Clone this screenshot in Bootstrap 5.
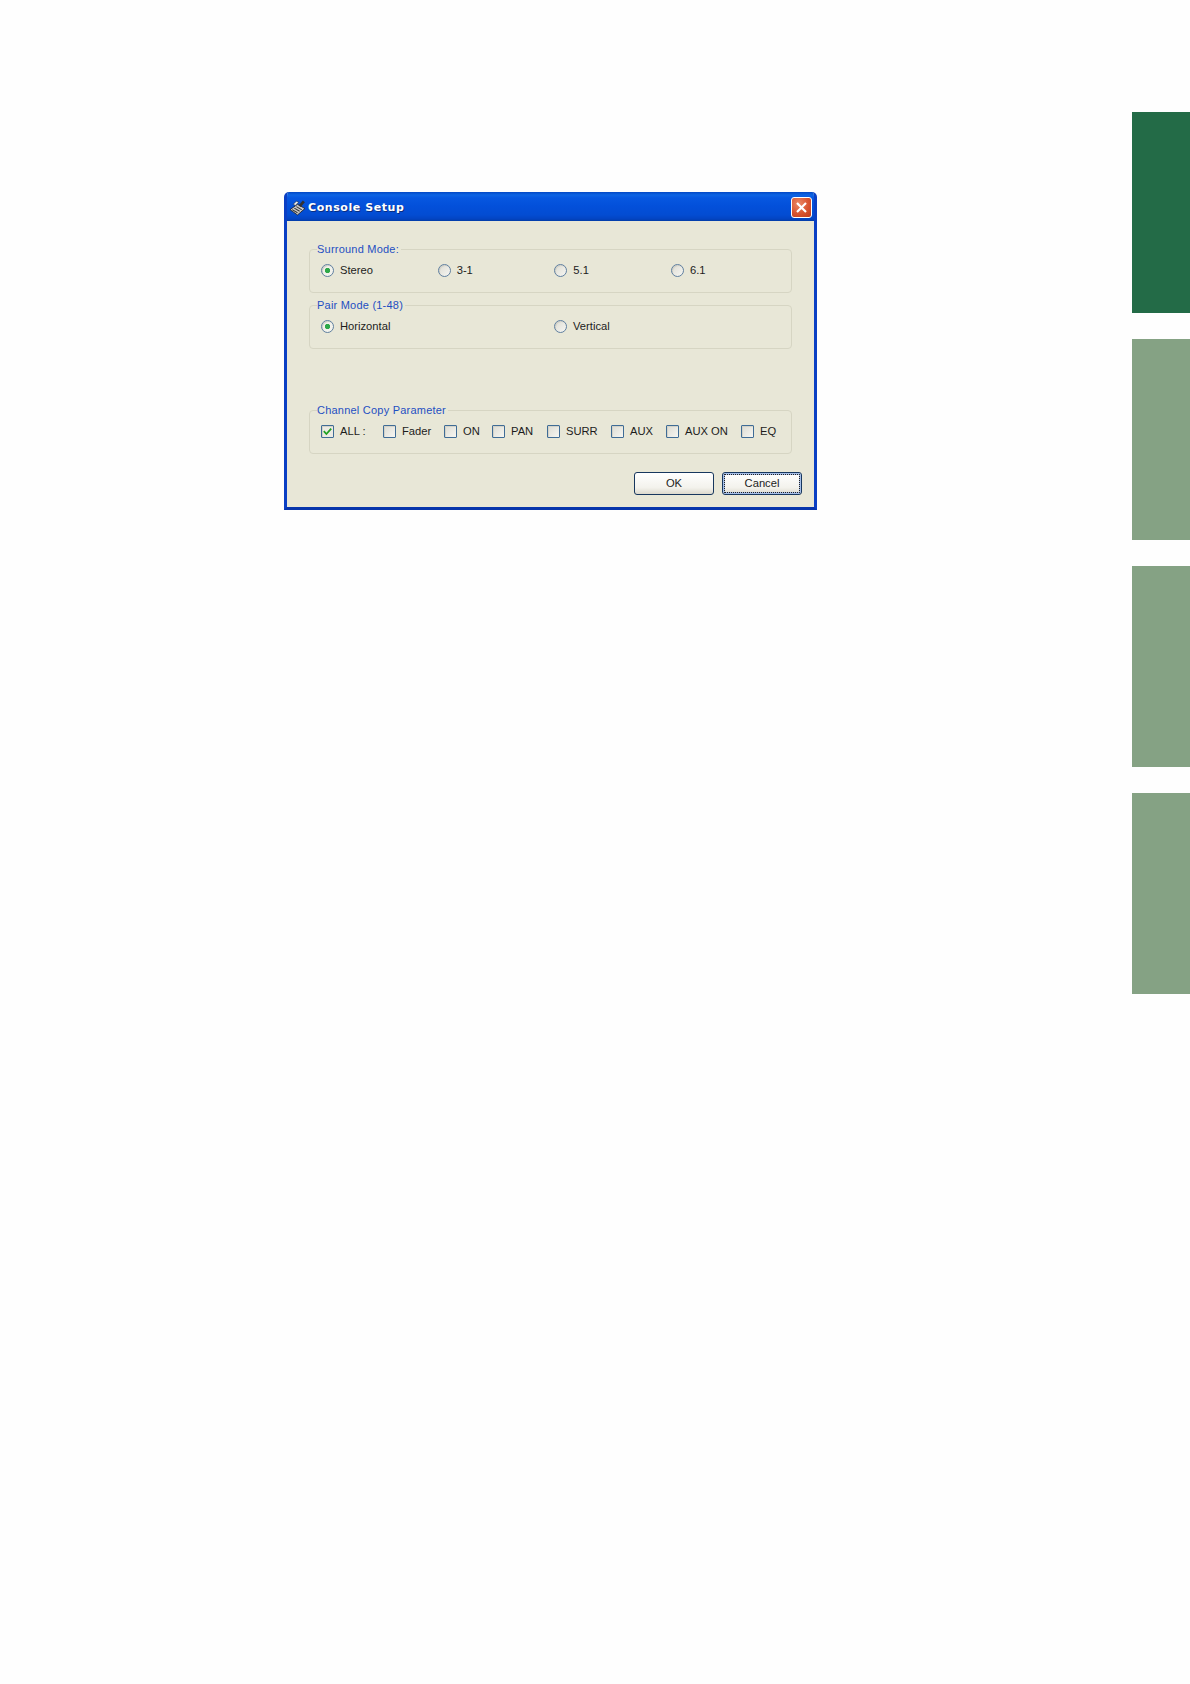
<!DOCTYPE html>
<html lang="en">
<head>
<meta charset="utf-8">
<title>Console Setup</title>
<link href="https://cdn.jsdelivr.net/npm/bootstrap@5.3.0/dist/css/bootstrap.min.css" rel="stylesheet">
<style>
html,body{height:1684px;overflow:hidden}
body{background:#fefefe;font-family:"Liberation Sans",Arial,sans-serif;font-size:11.2px;color:#1c1c1c}
.page-main{padding:192px 0 0 284px;width:1132px;flex:none}
.dlg-window{width:533px;height:318px;background:#e8e7d7;border-style:solid;border-width:0 3px 3px;border-color:#0b4ed6 #0a3fc4 #0735ab;border-radius:5px 5px 0 0;overflow:hidden}
.dlg-title{height:29px;margin:0 -3px;padding:2px 5px 0;gap:2px;background:linear-gradient(#0348c4 0,#0d64e4 3px,#0757e0 6px,#0350da 14px,#034cd2 23px,#0344c2 27px,#023ca6 29px);color:#fff;font:bold 11px "DejaVu Sans",Verdana,sans-serif;letter-spacing:.57px;text-shadow:1px 1px 0 #0a2d80}
.dlg-icon{width:17px;height:17px;flex:none}
.dlg-close{width:21px;height:21px;padding:0;border:1px solid #fff;border-radius:3px;background:radial-gradient(circle at 35% 30%,#ea8a68,#d9542f 55%,#bf3a1c)}
.dlg-close svg{display:block;margin:auto}
.dlg-body{padding:21px 22px 0}
.grp{border:1px solid #d6d5c3;border-radius:4px;padding:7px 11px 15px}
.grp legend{float:none;width:auto;margin:0 0 0 -4px;padding:0 2px 0 0;font-size:11px;line-height:14px;color:#1f4fc2;letter-spacing:.02em}
.grp-gap{margin-top:5px}
.grp-gap-wide{margin-top:54px}
.cols-four{display:grid;grid-template-columns:repeat(4,116.67px)}
.cols-two{display:grid;grid-template-columns:repeat(2,233px)}
.cols-check{display:grid;grid-template-columns:62px 61px 48px 55px 64px 55px 75px auto}
.opt{line-height:14px;white-space:nowrap;color:#1c1c1c}
.opt input.form-check-input{width:13px;height:13px;margin:0;flex:none;border:1px solid #5f7f9f;box-shadow:inset 1px 1px 0 #d3d2c8;background-color:#ecebe4;background-image:linear-gradient(135deg,#dddcd3,#f6f6f2)}
.opt input[type=radio].form-check-input{border-radius:50%}
.opt input[type=checkbox].form-check-input{border-radius:1px;border-color:#3f6c96}
.opt input[type=radio].form-check-input:checked{background-image:radial-gradient(circle,#2fa84a 0,#2fa84a 2.3px,#f2f2ec 3px)}
.opt input[type=checkbox].form-check-input:checked{background-color:#ecebe4;background-size:13px 13px;background-image:url("data:image/svg+xml,%3Csvg xmlns='http://www.w3.org/2000/svg' viewBox='0 0 13 13'%3E%3Cpath d='M2.8 6.2l2.6 2.8 4.8-5.4' fill='none' stroke='%2321a121' stroke-width='1.8'/%3E%3C/svg%3E")}
.opt label{margin:0 0 0 6px}
.xp-btn{width:80px;height:23px;padding:0;font-size:11.2px;line-height:21px;color:#1c1c1c;border:1px solid #17375e;border-radius:3px;background:linear-gradient(#fff,#f3f2ec 70%,#dcd9cd)}
.xp-btn:hover{color:#1c1c1c;border-color:#17375e}
.xp-btn-focus{box-shadow:inset 0 0 0 2px #a6bfe8;outline:1px dotted #222;outline-offset:-3px}
.dlg-actions{margin-top:18px;margin-right:-10px;gap:8px}
.tab-rail{width:58px;padding-top:112px;gap:26.4px}
.tab-block{height:200.6px;background:#85a284}
.tab-block-on{background:#236b47}
</style>
</head>
<body class="d-flex">
<main class="page-main">
  <div class="dlg-window">
    <div class="dlg-title d-flex align-items-center">
      <svg class="dlg-icon" viewBox="0 0 16 16" aria-hidden="true">
        <path d="M1 10 L8 5 L15 9 L8 15 Z" fill="#c9c9c9" stroke="#222" stroke-width=".8"/>
        <path d="M3 10l5 3M5 8.6l5 3M7 7.2l5 3" stroke="#333" stroke-width="1"/>
        <path d="M9 6 L13 1.5 L15 3 L11 7.5 Z" fill="#333"/>
        <path d="M4 5l3-3 2 1-3 3z" fill="#eee" stroke="#222" stroke-width=".5"/>
      </svg>
      <span class="flex-grow-1">Console Setup</span>
      <button type="button" class="dlg-close" aria-label="Close">
        <svg width="13" height="13" viewBox="0 0 13 13"><path d="M2 2l9 9M11 2l-9 9" stroke="#fff" stroke-width="2.2" fill="none"/></svg>
      </button>
    </div>
    <div class="dlg-body">
      <fieldset class="grp">
        <legend>Surround Mode:</legend>
        <div class="cols-four">
          <div class="opt d-flex align-items-center"><input class="form-check-input" type="radio" name="sm" id="s1" checked><label for="s1">Stereo</label></div>
          <div class="opt d-flex align-items-center"><input class="form-check-input" type="radio" name="sm" id="s2"><label for="s2">3-1</label></div>
          <div class="opt d-flex align-items-center"><input class="form-check-input" type="radio" name="sm" id="s3"><label for="s3">5.1</label></div>
          <div class="opt d-flex align-items-center"><input class="form-check-input" type="radio" name="sm" id="s4"><label for="s4">6.1</label></div>
        </div>
      </fieldset>
      <fieldset class="grp grp-gap">
        <legend>Pair Mode (1-48)</legend>
        <div class="cols-two">
          <div class="opt d-flex align-items-center"><input class="form-check-input" type="radio" name="pm" id="p1" checked><label for="p1">Horizontal</label></div>
          <div class="opt d-flex align-items-center"><input class="form-check-input" type="radio" name="pm" id="p2"><label for="p2">Vertical</label></div>
        </div>
      </fieldset>
      <fieldset class="grp grp-gap-wide">
        <legend>Channel Copy Parameter</legend>
        <div class="cols-check">
          <div class="opt d-flex align-items-center"><input class="form-check-input" type="checkbox" id="c1" checked><label for="c1">ALL :</label></div>
          <div class="opt d-flex align-items-center"><input class="form-check-input" type="checkbox" id="c2"><label for="c2">Fader</label></div>
          <div class="opt d-flex align-items-center"><input class="form-check-input" type="checkbox" id="c3"><label for="c3">ON</label></div>
          <div class="opt d-flex align-items-center"><input class="form-check-input" type="checkbox" id="c4"><label for="c4">PAN</label></div>
          <div class="opt d-flex align-items-center"><input class="form-check-input" type="checkbox" id="c5"><label for="c5">SURR</label></div>
          <div class="opt d-flex align-items-center"><input class="form-check-input" type="checkbox" id="c6"><label for="c6">AUX</label></div>
          <div class="opt d-flex align-items-center"><input class="form-check-input" type="checkbox" id="c7"><label for="c7">AUX ON</label></div>
          <div class="opt d-flex align-items-center"><input class="form-check-input" type="checkbox" id="c8"><label for="c8">EQ</label></div>
        </div>
      </fieldset>
      <div class="dlg-actions d-flex justify-content-end">
        <button type="button" class="btn xp-btn">OK</button>
        <button type="button" class="btn xp-btn xp-btn-focus">Cancel</button>
      </div>
    </div>
  </div>
</main>
<aside class="tab-rail d-flex flex-column">
  <div class="tab-block tab-block-on"></div>
  <div class="tab-block"></div>
  <div class="tab-block"></div>
  <div class="tab-block"></div>
</aside>
<script src="https://cdn.jsdelivr.net/npm/bootstrap@5.3.0/dist/js/bootstrap.bundle.min.js"></script>
</body>
</html>
